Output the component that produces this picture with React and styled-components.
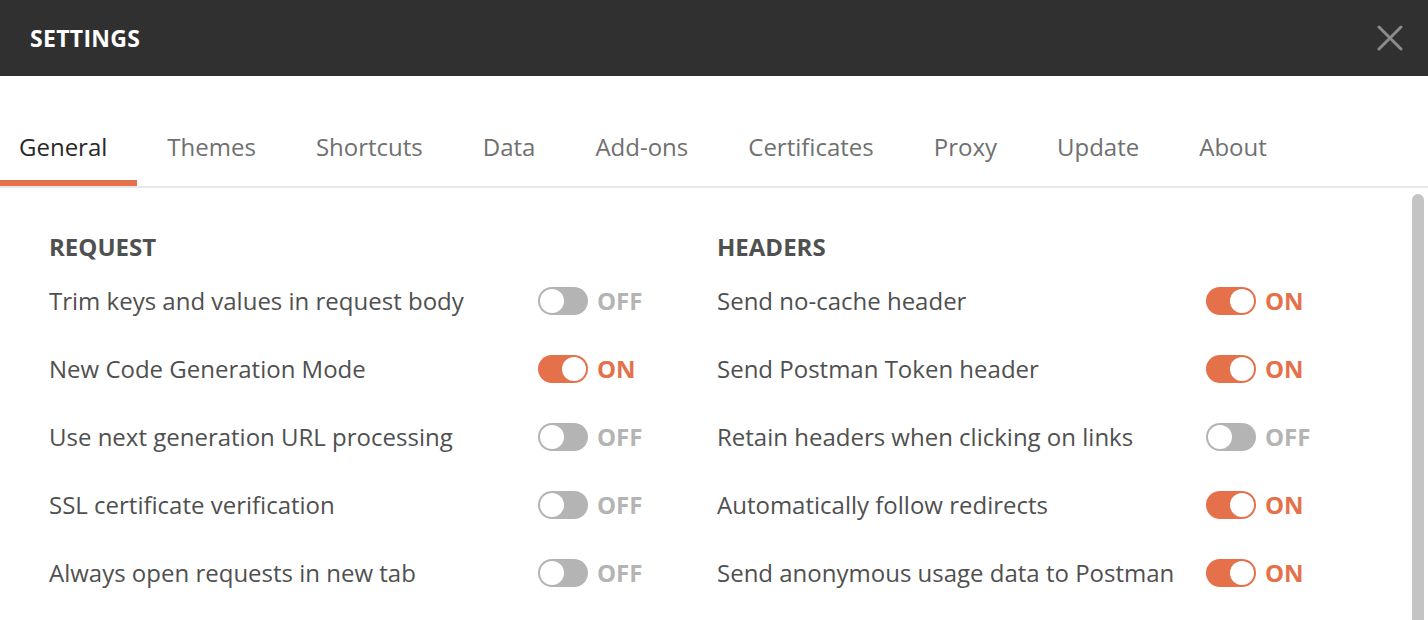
import React from 'react';
import styled, { createGlobalStyle } from 'styled-components';

const ORANGE = '#e5714a';
const GREY = '#b4b4b4';

const GlobalStyle = createGlobalStyle`
    html, body {
        margin: 0;
        padding: 0;
        background: #ffffff;
    }
    body {
        font-family: 'Open Sans', 'Noto Sans', sans-serif;
        -webkit-font-smoothing: antialiased;
    }
`;

const Window = styled.div`
    display: flex;
    flex-direction: column;
    width: 1428px;
    height: 620px;
    overflow: hidden;
    background: #ffffff;
`;

const TitleBar = styled.div`
    display: flex;
    align-items: center;
    justify-content: space-between;
    height: 76px;
    flex: 0 0 76px;
    padding: 0 22px 0 30px;
    background-color: #303030;
`;

const Title = styled.h1`
    margin: 0;
    font-size: 23px;
    font-weight: 700;
    letter-spacing: 0.3px;
    color: #ffffff;
`;

const CloseButton = styled.button`
    display: flex;
    align-items: center;
    justify-content: center;
    width: 32px;
    height: 32px;
    padding: 0;
    border: none;
    background: none;
    cursor: pointer;
`;

const TabBar = styled.div`
    display: flex;
    align-items: flex-end;
    height: 110px;
    flex: 0 0 auto;
    border-bottom: 2px solid #e8e8e8;
`;

const Tab = styled.div`
    padding: 0 30px 16px;
    font-size: 24px;
    line-height: 34px;
    color: ${({ active }) => (active ? '#282828' : '#707070')};
    border-bottom: 6px solid ${({ active }) => (active ? ORANGE : 'transparent')};
    cursor: pointer;
    &:first-child {
        padding-left: 19px;
    }
`;

const Body = styled.div`
    display: flex;
    flex: 1 1 auto;
    min-height: 0;
`;

const Content = styled.div`
    display: grid;
    grid-template-columns: 668px 1fr;
    align-content: start;
    flex: 1 1 auto;
    padding: 43px 0 0 49px;
`;

const Section = styled.div`
    display: flex;
    flex-direction: column;
`;

const Heading = styled.h2`
    margin: 0 0 3px;
    font-size: 24px;
    line-height: 32px;
    font-weight: 700;
    color: #505050;
`;

const Row = styled.div`
    display: flex;
    align-items: center;
    height: 68px;
`;

const Label = styled.div`
    width: 489px;
    font-size: 24px;
    color: #505050;
    white-space: nowrap;
`;

const Track = styled.div`
    display: flex;
    justify-content: ${({ on }) => (on ? 'flex-end' : 'flex-start')};
    box-sizing: border-box;
    width: 50px;
    height: 28px;
    padding: 2px;
    margin-top: 2px;
    border-radius: 14px;
    background-color: ${({ on }) => (on ? ORANGE : GREY)};
    cursor: pointer;
`;

const Knob = styled.div`
    width: 24px;
    height: 24px;
    border-radius: 50%;
    background-color: #ffffff;
`;

const State = styled.span`
    margin-left: 9px;
    font-size: 24px;
    font-weight: 700;
    color: ${({ on }) => (on ? ORANGE : GREY)};
`;

const ScrollRail = styled.div`
    display: flex;
    flex: 0 0 16px;
    padding: 6px 4px 0 0;
    box-sizing: border-box;
`;

const Thumb = styled.div`
    flex: 1 1 auto;
    border-radius: 6px 6px 0 0;
    background-color: #c4c4c4;
`;

const TABS = ['General', 'Themes', 'Shortcuts', 'Data', 'Add-ons', 'Certificates', 'Proxy', 'Update', 'About'];

const SECTIONS = [
    {
        title: 'REQUEST',
        items: [
            ['Trim keys and values in request body', false],
            ['New Code Generation Mode', true],
            ['Use next generation URL processing', false],
            ['SSL certificate verification', false],
            ['Always open requests in new tab', false],
        ],
    },
    {
        title: 'HEADERS',
        items: [
            ['Send no-cache header', true],
            ['Send Postman Token header', true],
            ['Retain headers when clicking on links', false],
            ['Automatically follow redirects', true],
            ['Send anonymous usage data to Postman', true],
        ],
    },
];

function Toggle({ on }) {
    return (
        <>
            <Track on={on ? 1 : 0}>
                <Knob />
            </Track>
            <State on={on ? 1 : 0}>{on ? 'ON' : 'OFF'}</State>
        </>
    );
}

export default function App() {
    return (
        <Window>
            <GlobalStyle />
            <TitleBar>
                <Title>SETTINGS</Title>
                <CloseButton aria-label="Close">
                    <svg width="26" height="26" viewBox="0 0 26 26">
                        <path d="M2 2 L24 24 M24 2 L2 24" stroke="#8b8b8b" strokeWidth="3" strokeLinecap="round" />
                    </svg>
                </CloseButton>
            </TitleBar>
            <TabBar>
                {TABS.map((t, i) => (
                    <Tab key={t} active={i === 0 ? 1 : 0}>{t}</Tab>
                ))}
            </TabBar>
            <Body>
                <Content>
                    {SECTIONS.map((section) => (
                        <Section key={section.title}>
                            <Heading>{section.title}</Heading>
                            {section.items.map(([label, on]) => (
                                <Row key={label}>
                                    <Label>{label}</Label>
                                    <Toggle on={on} />
                                </Row>
                            ))}
                        </Section>
                    ))}
                </Content>
                <ScrollRail>
                    <Thumb />
                </ScrollRail>
            </Body>
        </Window>
    );
}
